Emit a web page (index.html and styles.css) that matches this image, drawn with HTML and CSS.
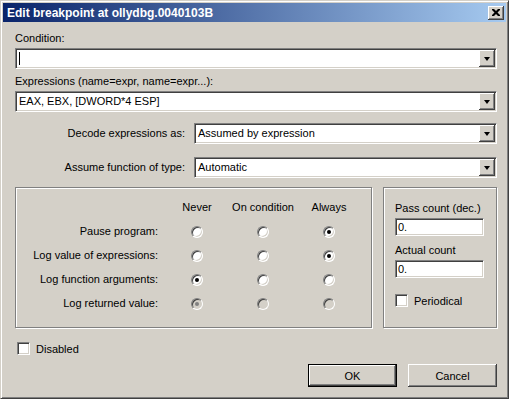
FILE: index.html
```html
<!DOCTYPE html>
<html lang="en">
<head>
    <meta charset="UTF-8" />
    <title>Edit breakpoint</title>
    <link rel="stylesheet" href="styles.css">
</head>
<body>
    <div class="window">

        <!-- Title bar -->
        <div class="titlebar">
            <span class="title">Edit breakpoint at ollydbg.0040103B</span>
            <span class="close">
                <svg width="8" height="7" viewBox="0 0 8 7"><path d="M0 0h2l2 2 2-2h2v1l-2.5 2.5L8 6v1H6L4 5 2 7H0V6l2.5-2.5L0 1z" fill="#000"/></svg>
            </span>
        </div>

        <div class="content">
            <div class="label">Condition:</div>
            <div class="combo">
                <div class="combo-text"><span class="caret"></span></div>
                <div class="drop"><span class="arrow"></span></div>
            </div>

            <div class="label label-second">Expressions (name=expr, name=expr...):</div>
            <div class="combo">
                <div class="combo-text">EAX, EBX, [DWORD*4 ESP]</div>
                <div class="drop"><span class="arrow"></span></div>
            </div>

            <div class="field-row decode-row">
                <div class="field-label">Decode expressions as:</div>
                <div class="combo">
                    <div class="combo-text">Assumed by expression</div>
                    <div class="drop"><span class="arrow"></span></div>
                </div>
            </div>

            <div class="field-row assume-row">
                <div class="field-label">Assume function of type:</div>
                <div class="combo">
                    <div class="combo-text">Automatic</div>
                    <div class="drop"><span class="arrow"></span></div>
                </div>
            </div>

            <div class="groups">
                <div class="group actions-group">
                    <div></div>
                    <div class="col-head">Never</div>
                    <div class="col-head">On condition</div>
                    <div class="col-head">Always</div>

                    <div class="row-label">Pause program:</div>
                    <div class="cell"><span class="radio"></span></div>
                    <div class="cell"><span class="radio"></span></div>
                    <div class="cell"><span class="radio checked"></span></div>

                    <div class="row-label">Log value of expressions:</div>
                    <div class="cell"><span class="radio"></span></div>
                    <div class="cell"><span class="radio"></span></div>
                    <div class="cell"><span class="radio checked"></span></div>

                    <div class="row-label">Log function arguments:</div>
                    <div class="cell"><span class="radio checked"></span></div>
                    <div class="cell"><span class="radio"></span></div>
                    <div class="cell"><span class="radio"></span></div>

                    <div class="row-label">Log returned value:</div>
                    <div class="cell"><span class="radio checked disabled"></span></div>
                    <div class="cell"><span class="radio disabled"></span></div>
                    <div class="cell"><span class="radio disabled"></span></div>
                </div>

                <div class="group count-group">
                    <div class="label">Pass count (dec.)</div>
                    <div class="edit">0.</div>
                    <div class="label actual-label">Actual count</div>
                    <div class="edit">0.</div>
                    <div class="check-row periodical">
                        <span class="checkbox"></span>
                        <span>Periodical</span>
                    </div>
                </div>
            </div>

            <div class="check-row disabled-row">
                <span class="checkbox"></span>
                <span>Disabled</span>
            </div>

            <div class="buttons">
                <button class="btn default">OK</button>
                <button class="btn">Cancel</button>
            </div>
        </div>
    </div>
</body>
</html>
```

FILE: styles.css
```css
:root {
    --face: #d4d0c8;
    --shadow: #808080;
    --dark: #404040;
    --light: #fff;
}

body {
    margin: 0;
    background-color: var(--face);
    font-family: 'Liberation Sans', Arial, sans-serif;
    font-size: 11px;
    color: #000;
}

.window {
    width: 509px;
    height: 399px;
    box-sizing: border-box;
    border: 1px solid;
    border-color: var(--face) var(--dark) var(--dark) var(--face);
    box-shadow: inset 1px 1px var(--light), inset -1px -1px var(--shadow);
    padding: 2px;
    background-color: var(--face);
}

.titlebar {
    height: 19px;
    display: flex;
    align-items: center;
    justify-content: space-between;
    padding: 0 2px 0 4px;
    background: linear-gradient(to right, #0a246a, #a6caf0);
}

.title {
    color: #fff;
    font-weight: bold;
    font-size: 12px;
}

.close {
    width: 16px;
    height: 14px;
    box-sizing: border-box;
    display: flex;
    align-items: center;
    justify-content: center;
    background-color: var(--face);
    box-shadow: inset -1px -1px var(--dark), inset 1px 1px var(--light), inset -2px -2px var(--shadow);
}

.content {
    padding: 10px 9px 0 12px;
}

.label {
    line-height: 13px;
    height: 13px;
    margin-bottom: 3px;
}

.label-second {
    margin-top: 6px;
}

.combo {
    height: 21px;
    box-sizing: border-box;
    display: flex;
    align-items: center;
    border: 1px solid;
    border-color: var(--shadow) var(--light) var(--light) var(--shadow);
    box-shadow: inset 1px 1px var(--dark), inset -1px -1px var(--face);
    background-color: #fff;
    padding: 1px;
    flex: 1;
}

.combo-text {
    flex: 1;
    padding-left: 2px;
    line-height: 17px;
    display: flex;
    align-items: center;
    white-space: nowrap;
}

.caret {
    width: 1px;
    height: 13px;
    background-color: #000;
}

.drop {
    width: 16px;
    height: 17px;
    box-sizing: border-box;
    background-color: var(--face);
    box-shadow: inset -1px -1px var(--dark), inset 1px 1px var(--light), inset -2px -2px var(--shadow);
    display: flex;
    align-items: center;
    justify-content: center;
}

.arrow {
    width: 0;
    height: 0;
    border-left: 3.5px solid transparent;
    border-right: 3.5px solid transparent;
    border-top: 4px solid #000;
    margin-top: 1px;
}

.field-row {
    display: flex;
    align-items: center;
}

.decode-row {
    margin-top: 11px;
}

.assume-row {
    margin-top: 13px;
}

.field-label {
    width: 170px;
    padding-right: 9px;
    text-align: right;
    padding-bottom: 2px;
}

.groups {
    display: flex;
    gap: 11px;
    margin-top: 9px;
}

.group {
    box-sizing: border-box;
    height: 141px;
    border: 1px solid var(--shadow);
    box-shadow: inset 1px 1px var(--light), 1px 1px var(--light);
}

.actions-group {
    width: 357px;
    display: grid;
    grid-template-columns: 148px 66px 66px 66px;
    grid-auto-rows: 24px;
    padding-top: 8px;
    align-items: center;
}

.col-head {
    text-align: center;
    padding-bottom: 2px;
}

.row-label {
    text-align: right;
    padding-right: 6px;
    padding-bottom: 2px;
}

.cell {
    display: flex;
    justify-content: center;
}

.radio {
    width: 12px;
    height: 12px;
    box-sizing: border-box;
    border-radius: 50%;
    border: 1px solid;
    border-color: var(--shadow) var(--light) var(--light) var(--shadow);
    box-shadow: inset 1px 1px var(--dark), inset -1px -1px var(--face);
    background-color: #fff;
    display: flex;
    align-items: center;
    justify-content: center;
}

.radio.checked::after {
    content: '';
    width: 4px;
    height: 4px;
    border-radius: 50%;
    background-color: #000;
}

.radio.disabled {
    background-color: var(--face);
}

.radio.disabled.checked::after {
    background-color: var(--shadow);
}

.count-group {
    width: 114px;
    padding: 14px 0 0 11px;
}

.edit {
    width: 89px;
    height: 18px;
    box-sizing: border-box;
    border: 1px solid;
    border-color: var(--shadow) var(--light) var(--light) var(--shadow);
    box-shadow: inset 1px 1px var(--dark), inset -1px -1px var(--face);
    background-color: #fff;
    padding-left: 2px;
    line-height: 16px;
    margin-top: 2px;
}

.actual-label {
    margin-top: 8px;
}

.check-row {
    display: flex;
    align-items: center;
    gap: 6px;
}

.checkbox {
    width: 13px;
    height: 13px;
    box-sizing: border-box;
    border: 1px solid;
    border-color: var(--shadow) var(--light) var(--light) var(--shadow);
    box-shadow: inset 1px 1px var(--dark), inset -1px -1px var(--face);
    background-color: #fff;
}

.periodical {
    margin-top: 16px;
}

.disabled-row {
    margin-top: 14px;
    padding-left: 2px;
}

.buttons {
    display: flex;
    justify-content: flex-end;
    gap: 11px;
    margin-top: 9px;
}

.btn {
    width: 89px;
    height: 23px;
    box-sizing: border-box;
    border: none;
    padding: 0;
    font-family: inherit;
    font-size: 11px;
    color: #000;
    background-color: var(--face);
    box-shadow: inset -1px -1px var(--dark), inset 1px 1px var(--light), inset -2px -2px var(--shadow);
}

.btn.default {
    border: 1px solid #000;
}
```
